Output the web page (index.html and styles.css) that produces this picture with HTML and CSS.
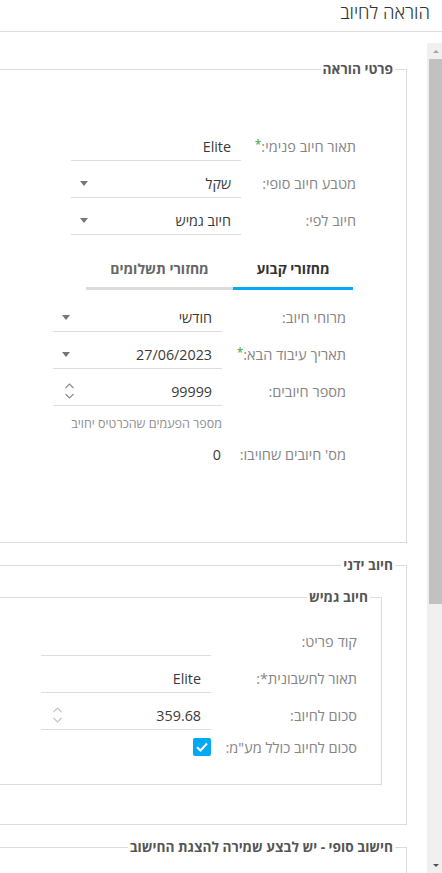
FILE: index.html
```
<!DOCTYPE html>
<html lang="he" dir="rtl">
<head>
<meta charset="utf-8">
<title>הוראה לחיוב</title>
<link rel="stylesheet" href="styles.css">
</head>
<body>
<header class="topbar"><h1 class="title">הוראה לחיוב</h1></header>
<div class="main">
  <div class="pane">
    <fieldset class="group">
      <legend class="legend">פרטי הוראה</legend>
      <div class="group-body body-a">
        <div class="row">
          <label class="label lab-a">תאור חיוב פנימי:<span class="req">*</span></label>
          <div class="field fld-a"><span class="value">Elite</span></div>
        </div>
        <div class="row">
          <label class="label lab-a">מטבע חיוב סופי:</label>
          <div class="field fld-a"><span class="value">שקל</span><span class="caret"></span></div>
        </div>
        <div class="row row-last">
          <label class="label lab-a">חיוב לפי:</label>
          <div class="field fld-a"><span class="value">חיוב גמיש</span><span class="caret"></span></div>
        </div>
        <div class="tabs-wrap">
          <div class="tabbar">
            <div class="tab active">מחזורי קבוע</div>
            <div class="tab">מחזורי תשלומים</div>
          </div>
          <div class="tabpane">
            <div class="row">
              <label class="label lab-b">מרוחי חיוב:</label>
              <div class="field fld-b"><span class="value">חודשי</span><span class="caret"></span></div>
            </div>
            <div class="row">
              <label class="label lab-b">תאריך עיבוד הבא:<span class="req">*</span></label>
              <div class="field fld-b"><span class="value">27/06/2023</span><span class="caret"></span></div>
            </div>
            <div class="row row-last">
              <label class="label lab-b">מספר חיובים:</label>
              <div class="field fld-b"><span class="value">99999</span>
                <svg class="spin" width="9" height="18" viewBox="0 0 9 18"><polyline points="0.5,6 4.5,2 8.5,6" fill="none" stroke="#888" stroke-width="1.1"/><polyline points="0.5,12 4.5,16 8.5,12" fill="none" stroke="#888" stroke-width="1.1"/></svg>
              </div>
            </div>
            <div class="hint">מספר הפעמים שהכרטיס יחויב</div>
            <div class="row row-last">
              <label class="label lab-b">מס' חיובים שחויבו:</label>
              <div class="field fld-b plain"><span class="value">0</span></div>
            </div>
          </div>
        </div>
      </div>
    </fieldset>

    <fieldset class="group group-next">
      <legend class="legend">חיוב ידני</legend>
      <div class="group-body body-b">
        <fieldset class="group nested">
          <legend class="legend">חיוב גמיש</legend>
          <div class="group-body body-c">
            <div class="row">
              <label class="label lab-c">קוד פריט:</label>
              <div class="field fld-c"></div>
            </div>
            <div class="row">
              <label class="label lab-c">תאור לחשבונית*:</label>
              <div class="field fld-c"><span class="value">Elite</span></div>
            </div>
            <div class="row">
              <label class="label lab-c">סכום לחיוב:</label>
              <div class="field fld-c"><span class="value">359.68</span>
                <svg class="spin" width="9" height="18" viewBox="0 0 9 18"><polyline points="0.5,6 4.5,2 8.5,6" fill="none" stroke="#c4c4c4" stroke-width="1.1"/><polyline points="0.5,12 4.5,16 8.5,12" fill="none" stroke="#c4c4c4" stroke-width="1.1"/></svg>
              </div>
            </div>
            <div class="row row-check">
              <label class="label lab-c">סכום לחיוב כולל מע"מ:</label>
              <div class="fld-c check-cell">
                <span class="checkbox"><svg width="18" height="18" viewBox="0 0 18 18"><polyline points="4,9.2 7.5,12.5 14,5.5" fill="none" stroke="#fff" stroke-width="2"/></svg></span>
              </div>
            </div>
          </div>
        </fieldset>
      </div>
    </fieldset>

    <fieldset class="group group-next">
      <legend class="legend">חישוב סופי - יש לבצע שמירה להצגת החישוב</legend>
      <div class="group-body body-d"></div>
    </fieldset>
  </div>
  <div class="scrollbar">
    <div class="sb-btn"><span class="sb-up"></span></div>
    <div class="sb-thumb"></div>
    <div class="sb-track"></div>
    <div class="sb-btn"><span class="sb-down"></span></div>
  </div>
</div>
</body>
</html>
```
FILE: styles.css
```
html, body {
  margin: 0;
  padding: 0;
}
body {
  width: 442px;
  height: 873px;
  overflow: hidden;
  background: #fff;
  font-family: "Open Sans", "Liberation Sans", Arial, sans-serif;
  color: #333;
}
.topbar {
  box-sizing: border-box;
  height: 32px;
  border-bottom: 1px solid #dedede;
  padding: 1px 12px 0 0;
}
.title {
  margin: 0;
  font-size: 18.5px;
  font-weight: 300;
  line-height: 22px;
  color: #333;
}
.main {
  display: flex;
  flex-direction: row-reverse;
  margin-top: 11px;
  height: 830px;
}
.pane {
  flex: 1;
  overflow: hidden;
  padding-top: 17px;
}
.scrollbar {
  width: 15px;
  background: #f0f0f0;
  display: flex;
  flex-direction: column;
}
.sb-btn {
  height: 16px;
  display: flex;
  align-items: center;
  justify-content: flex-start;
  padding-left: 6px;
  direction: ltr;
}
.sb-up {
  width: 0; height: 0;
  border-left: 3px solid transparent;
  border-right: 3px solid transparent;
  border-bottom: 3px solid #a3a3a3;
}
.sb-down {
  width: 0; height: 0;
  border-left: 3px solid transparent;
  border-right: 3px solid transparent;
  border-top: 3px solid #505050;
}
.sb-thumb {
  height: 545px;
  background: #c1c1c1;
  margin-left: 2px;
}
.sb-track { flex: 1; }

.group {
  margin: 0 20px 0 0;
  padding: 0;
  border: 1px solid #dcdcdc;
  width: 640px;
  min-width: 0;
}
.group-next { margin-top: 13px; }
.legend {
  margin-right: 11px;
  padding: 0 2px;
  font-size: 13.7px;
  line-height: 18px;
  font-weight: bold;
  color: #555;
}
.nested {
  margin: 14px 24px 0 0;
}

.body-a { padding: 54px 50px 73px 0; }
.body-b { padding: 0 0 39px 0; }
.body-c { padding: 21px 24px 28px 0; }
.body-d { height: 60px; }

.row {
  display: flex;
  align-items: center;
  height: 29px;
  margin-bottom: 8px;
}
.row-last { margin-bottom: 0; }
.row-check { height: 18px; margin-bottom: 0; }
.label {
  font-size: 14.5px;
  color: #858585;
  white-space: nowrap;
}
.req {
  color: #3aa53a;
  font-size: 12px;
  position: relative;
  top: -3px;
}
.lab-a { width: 115px; }
.lab-b { width: 124px; }
.lab-c { width: 146px; }
.field {
  box-sizing: border-box;
  height: 29px;
  border-bottom: 1px solid #dddddd;
  display: flex;
  align-items: center;
  justify-content: space-between;
  padding: 0 10px 0 0;
}
.fld-a { width: 170px; }
.fld-b { width: 169px; }
.fld-c { width: 170px; }
.plain { border-bottom: none; padding-right: 1px; }
.value {
  font-size: 14.3px;
  color: #3a3a3a;
}
.caret {
  width: 0; height: 0;
  border-left: 4px solid transparent;
  border-right: 4px solid transparent;
  border-top: 5px solid #777;
  margin-left: 9px;
}
.spin { margin-left: 12px; }

.tabs-wrap { margin: 8px 3px 0 0; }
.tabbar {
  display: flex;
  width: 267px;
}
.tab {
  box-sizing: border-box;
  padding: 17px 0 9px;
  width: 120px;
  text-align: center;
  font-size: 14px;
  line-height: 18px;
  font-weight: bold;
  color: #666;
  border-bottom: 3px solid #dcdcdc;
}
.tab + .tab { width: 147px; }
.tab.active {
  color: #333;
  border-bottom-color: #03a9f4;
}
.tabpane {
  padding: 13px 7px 0 0;
}
.hint {
  margin: 10px 124px 8px 0;
  font-size: 12.5px;
  line-height: 16px;
  color: #8f8f8f;
}
.check-cell {
  display: flex;
  align-items: center;
}
.checkbox {
  display: block;
  width: 18px;
  height: 18px;
  border-radius: 2px;
  background: #03a9f4;
}
.checkbox svg { display: block; }
```
